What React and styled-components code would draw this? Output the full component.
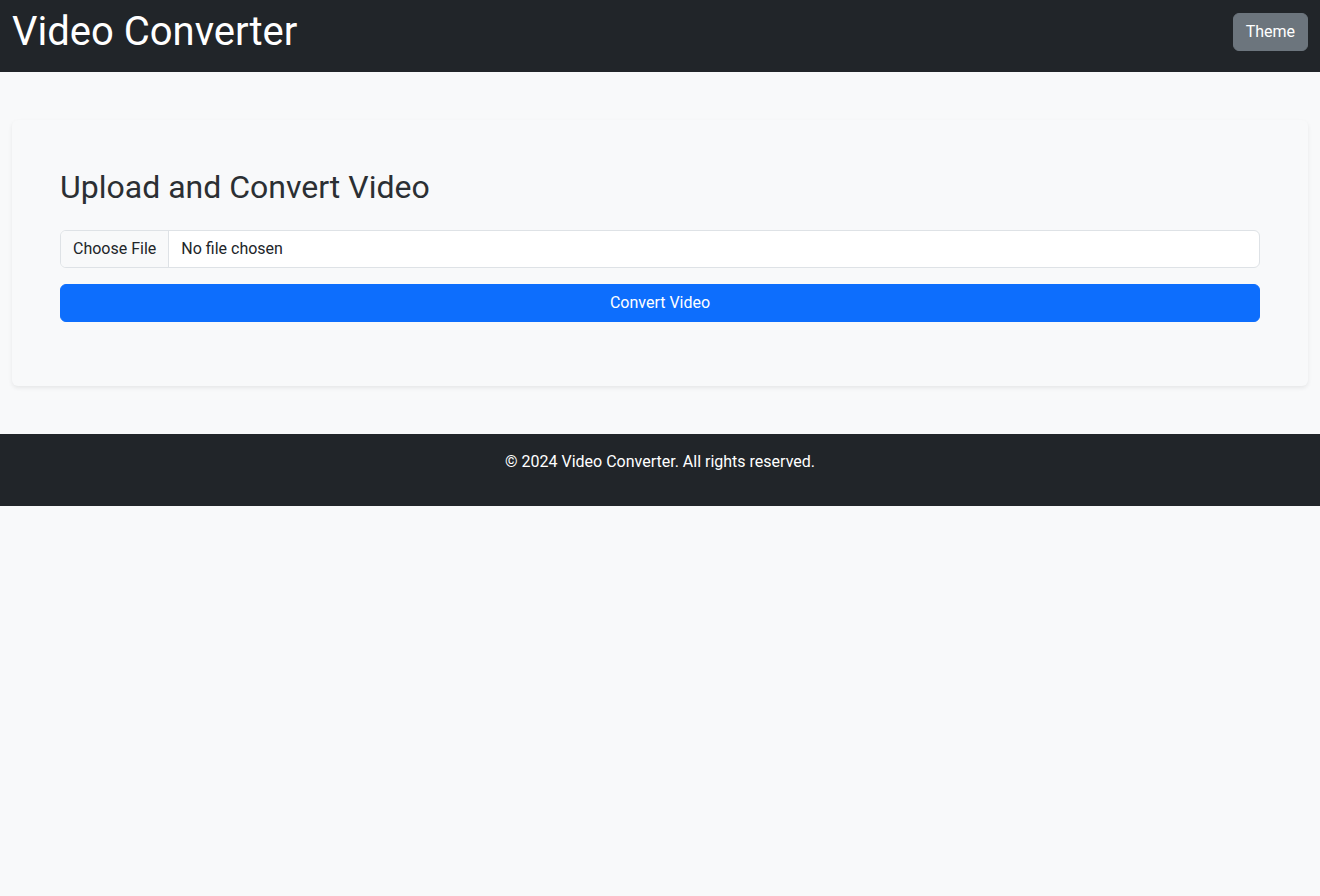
import React from "react";
import styled, { createGlobalStyle } from "styled-components";

const GlobalStyle = createGlobalStyle`
  * { box-sizing: border-box; }
  html, body { margin: 0; padding: 0; }
  body {
    background: #f8f9fa;
    color: #212529;
    font-family: Roboto, "Liberation Sans", Arial, sans-serif;
    font-size: 16px;
    line-height: 1.5;
  }
`;

const Header = styled.header`
  background: #212529;
  color: #fff;
  padding: 8px 12px 16px;
  display: flex;
  align-items: center;
  justify-content: space-between;
`;

const Title = styled.h1`
  margin: 0;
  font-size: 40px;
  font-weight: 400;
  line-height: 48px;
`;

const ThemeButton = styled.button`
  font-family: inherit;
  font-size: 16px;
  line-height: 24px;
  padding: 6px 12px;
  color: #fff;
  background: #6c757d;
  border: 1px solid #6c757d;
  border-radius: 6px;
  cursor: pointer;
`;

const Main = styled.main`
  padding: 48px 12px;
`;

const Card = styled.section`
  background: #f8f9fa;
  border-radius: 6px;
  box-shadow: 0 2px 4px rgba(0, 0, 0, 0.075);
  padding: 48px;
`;

const CardTitle = styled.h2`
  margin: 0 0 24px;
  font-size: 32px;
  font-weight: 400;
  line-height: 38.4px;
  color: #2b2f33;
`;

const Form = styled.form`
  display: flex;
  flex-direction: column;
  gap: 16px;
  margin-bottom: 16px;
`;

const FileInput = styled.input`
  display: block;
  width: 100%;
  height: 38px;
  padding: 6px 12px;
  font-family: inherit;
  font-size: 16px;
  line-height: 24px;
  color: #212529;
  background: #fff;
  border: 1px solid #dee2e6;
  border-radius: 6px;
  overflow: hidden;

  &::file-selector-button {
    font-family: inherit;
    font-size: 16px;
    line-height: 24px;
    padding: 6px 12px;
    margin: -6px 12px -6px -12px;
    color: #212529;
    background: #f8f9fa;
    border: 0;
    border-right: 1px solid #dee2e6;
    border-radius: 0;
    height: 36px;
  }
`;

const SubmitButton = styled.button`
  width: 100%;
  font-family: inherit;
  font-size: 16px;
  line-height: 24px;
  padding: 6px 12px;
  color: #fff;
  background: #0d6efd;
  border: 1px solid #0d6efd;
  border-radius: 6px;
  cursor: pointer;
`;

const Footer = styled.footer`
  background: #212529;
  color: #fff;
  text-align: center;
  padding: 16px 12px;
`;

const FooterText = styled.p`
  margin: 0 0 16px;
`;

export default function App() {
  return (
    <>
      <GlobalStyle />
      <Header>
        <Title>Video Converter</Title>
        <ThemeButton type="button">Theme</ThemeButton>
      </Header>
      <Main>
        <Card>
          <CardTitle>Upload and Convert Video</CardTitle>
          <Form onSubmit={(e) => e.preventDefault()}>
            <FileInput type="file" accept="video/*" />
            <SubmitButton type="submit">Convert Video</SubmitButton>
          </Form>
        </Card>
      </Main>
      <Footer>
        <FooterText>© 2024 Video Converter. All rights reserved.</FooterText>
      </Footer>
    </>
  );
}
